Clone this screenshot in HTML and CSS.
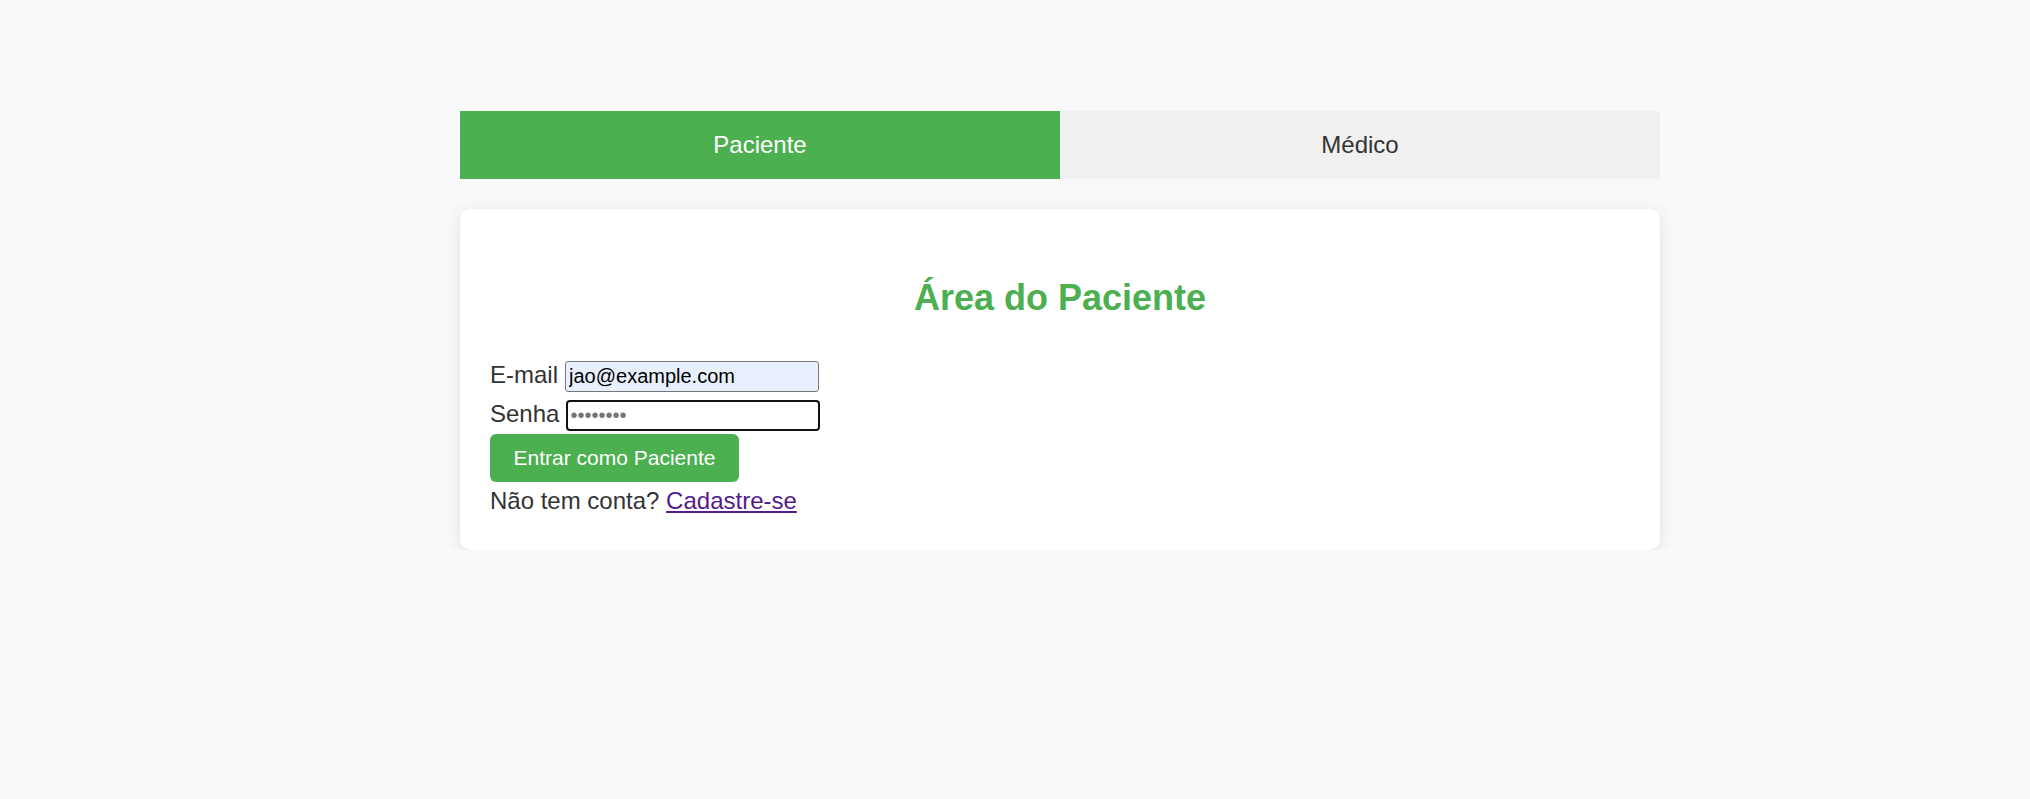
FILE: index.html
```html
<!DOCTYPE html>
<html lang="pt-BR">
<head>
<meta charset="utf-8">
<title>Login</title>
<link rel="stylesheet" href="styles.css">
</head>
<body>
<main class="container">
  <div class="tabs">
    <button class="tab tab-active" type="button">Paciente</button>
    <button class="tab" type="button">Médico</button>
  </div>
  <section class="card">
    <h2 class="card-title">Área do Paciente</h2>
    <form class="form">
      <div class="row row-email">
        <label class="label" for="email">E-mail</label>
        <input class="input input-filled" id="email" type="email" value="jao@example.com">
      </div>
      <div class="row row-pass">
        <label class="label" for="senha">Senha</label>
        <input class="input input-focus" id="senha" type="password" placeholder="••••••••">
      </div>
      <button class="submit" type="submit">Entrar como Paciente</button>
      <p class="signup">Não tem conta? <a class="signup-link" href="#">Cadastre-se</a></p>
    </form>
  </section>
</main>
</body>
</html>
```

FILE: styles.css
```css
html, body {
  margin: 0;
  padding: 0;
}

body {
  background: #f9f9f9;
  font-family: "Liberation Sans", Arial, sans-serif;
  font-size: 24px;
  color: #333;
}

.container {
  width: 1200px;
  margin: 111px 0 0 460px;
}

.tabs {
  display: flex;
}

.tab {
  flex: 1;
  height: 68px;
  border: none;
  margin: 0;
  padding: 0;
  background: #f0f0f0;
  color: #333;
  font-family: "Liberation Sans", Arial, sans-serif;
  font-size: 24px;
  cursor: pointer;
}

.tab-active {
  background: #4caf50;
  color: #fff;
}

.card {
  margin-top: 30px;
  background: #fff;
  border-radius: 10px;
  box-shadow: 0 2px 15px rgba(0, 0, 0, 0.1);
  padding: 30px 30px 35px;
}

.card-title {
  margin: 38px 0 42px;
  text-align: center;
  color: #4caf50;
  font-size: 36px;
  font-weight: bold;
}

.form {
  margin: 0;
}

.row {
  display: flex;
  align-items: baseline;
  gap: 7px;
}

.row-email {
  margin-bottom: 8px;
}

.row-pass {
  margin-bottom: 3px;
}

.label {
  color: #333;
}

.input {
  box-sizing: border-box;
  width: 254px;
  height: 31px;
  padding: 1px 3px;
  border: 1px solid #767676;
  border-radius: 3px;
  font-family: "Liberation Sans", Arial, sans-serif;
  font-size: 20px;
  color: #000;
  background: #fff;
}

.input-filled {
  background: #e8f0fe;
}

.input-focus {
  border: 2px solid #101010;
  border-radius: 4px;
  outline: none;
  padding: 0 2px;
}

.input-focus::placeholder {
  color: #757575;
}

.submit {
  display: block;
  margin: 0 0 5px;
  padding: 12px 23.5px;
  border: none;
  border-radius: 6px;
  background: #4caf50;
  color: #fff;
  font-family: "Liberation Sans", Arial, sans-serif;
  font-size: 21px;
  line-height: normal;
  cursor: pointer;
}

.signup {
  margin: 0;
  color: #333;
}

.signup-link {
  color: #551a8b;
  text-decoration: underline;
}
```
